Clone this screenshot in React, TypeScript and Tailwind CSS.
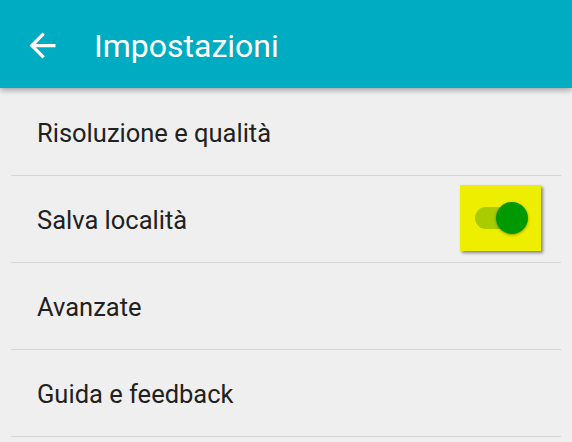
import React from "react";

const rows = ["Risoluzione e qualità", "Salva località", "Avanzate", "Guida e feedback"];

export default function App() {
  return (
    <div className="w-[572px] h-[442px] bg-[#efefef] overflow-hidden" style={{ fontFamily: "Roboto, 'Noto Sans', sans-serif" }}>
      <div className="relative z-10 h-[88px] bg-[#00acc1] flex items-center shadow-[0_2px_6px_rgba(0,0,0,0.35)]">
        <svg className="ml-[23px] mt-[3px]" width="39" height="39" viewBox="0 0 24 24">
          <path d="M20 11H7.83l5.59-5.59L12 4l-8 8 8 8 1.41-1.41L7.83 13H20v-2z" fill="#ffffff" />
        </svg>
        <span className="ml-[32px] text-white text-[32px] leading-none mt-[3px]">Impostazioni</span>
      </div>
      <div className="flex flex-col pt-[1px]">
        {rows.map((r, i) => (
          <div key={r} className="mx-[11px] h-[87px] flex items-center justify-between border-b border-[#d6d6d6]">
            <span className="ml-[26px] mt-[4px] text-[25.5px] text-[#212121] leading-none">{r}</span>
            {i === 1 && (
              <div className="mr-[20px] mb-[2px] w-[81px] h-[66px] bg-[#eeee00] shadow-[2px_2px_3px_rgba(0,0,0,0.45)] flex items-center justify-center">
                <div className="relative w-[54px] h-[32px] flex items-center">
                  <div className="ml-[1px] w-[44px] h-[22px] rounded-full bg-[#a8cc00]" />
                  <div className="absolute right-0 top-0 w-[32px] h-[32px] rounded-full bg-[#009900] shadow-[0_1px_3px_rgba(0,0,0,0.35)]" />
                </div>
              </div>
            )}
          </div>
        ))}
      </div>
    </div>
  );
}
